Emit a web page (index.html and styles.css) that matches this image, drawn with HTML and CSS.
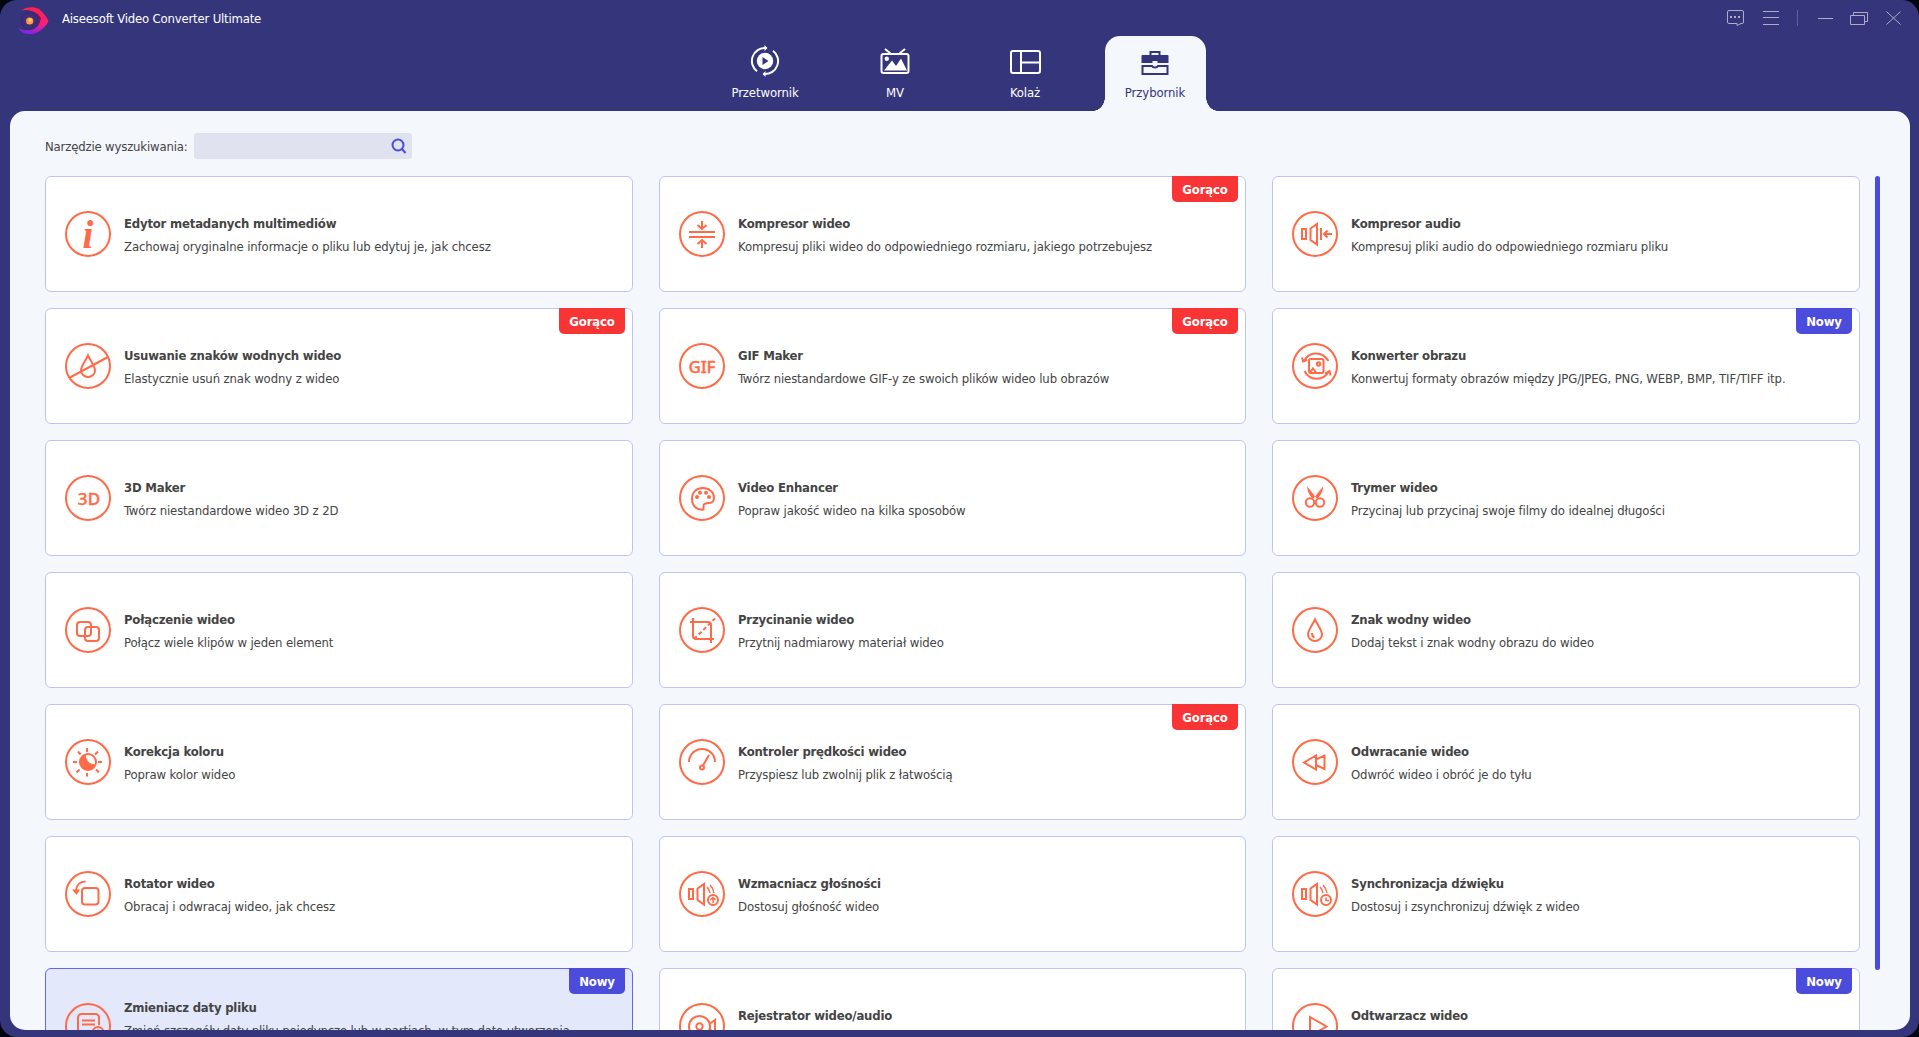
FILE: index.html
```
<!DOCTYPE html>
<html lang="pl">
<head>
    <meta charset="UTF-8">
    <meta name="viewport" content="width=device-width, initial-scale=1.0">
    <title>Aiseesoft Video Converter Ultimate</title>
    <link rel="stylesheet" href="styles.css">
</head>
<body>
    <div class="window">
        <header class="titlebar">
            <svg class="logo" width="32" height="30" viewBox="0 0 32 30">
                <defs>
                    <linearGradient id="logo-body" x1="0.6" y1="0" x2="0.3" y2="1">
                        <stop offset="0" stop-color="#ff1f4e"/>
                        <stop offset="0.5" stop-color="#f8207c"/>
                        <stop offset="1" stop-color="#7a22f5"/>
                    </linearGradient>
                    <radialGradient id="logo-eye">
                        <stop offset="0" stop-color="#5c2c80"/>
                        <stop offset="1" stop-color="#302c76"/>
                    </radialGradient>
                </defs>
                <path d="M4.500 4.500C8 1 17 0 22 3c4 3 7 7 9 11q.6 1.300 0 2.600C28 21 25 24 20 26.500 13 30 4 28 1.300 21.500 5 25 12 25 17 23c5-3 7-8 5-12C19 5 11 3 4.500 4.500z" fill="url(#logo-body)"/>
                <path d="M9 5c7-.5 12 2 15 7-1 6-4 9.500-9 11.500z" fill="#7c1650"/>
                <circle cx="12.500" cy="14.500" r="9.300" fill="url(#logo-eye)"/>
                <circle cx="12.700" cy="15" r="3.600" fill="#ff9c45"/>
                <circle cx="13.300" cy="14" r="1.800" fill="#ffd24a"/>
            </svg>
            <span class="app-name">Aiseesoft Video Converter Ultimate</span>
            <svg class="controls" width="176" height="18" viewBox="0 0 176 18">
                <path d="M3 1.500h13a1.500 1.500 0 0 1 1.500 1.500v10a1.500 1.500 0 0 1-1.500 1.500h-1l-4 2v-2H3a1.500 1.500 0 0 1-1.500-1.500V3A1.500 1.500 0 0 1 3 1.500z"/>
                <path class="dots" d="M4 7h2v2H4zM8 7h2v2H8zM12 7h2v2h-2z"/>
                <path d="M37 2.500h16M37 8.500h16M37 15.500h16"/>
                <path class="divider" d="M71.500 1v16"/>
                <path d="M92 9.500h15"/>
                <path d="M127.500 6V3.500h14v9H139M124.500 6.500h14v9h-14z"/>
                <path d="M160.500 2.500l14 13M174.500 2.500l-14 13"/>
            </svg>
        </header>

        <nav class="tabs">
            <div class="tab">
                <svg width="34" height="34" viewBox="0 0 34 34">
                    <circle cx="17" cy="17" r="8.200" fill="currentColor"/>
                    <path d="M14.500 13v8l6-4z" fill="#35357b"/>
                    <path d="M17.500 4A13 13 0 0 0 9 27.300M16.500 30A13 13 0 0 0 25 6.700" class="line"/>
                    <path d="M16.500 1l3 3-3 3zM17.500 27l-3 3 3 3z" fill="currentColor"/>
                </svg>
                <span>Przetwornik</span>
            </div>
            <div class="tab">
                <svg width="34" height="34" viewBox="0 0 34 34">
                    <rect x="3.500" y="10" width="27" height="19" rx="2" class="line"/>
                    <path d="M7 5l5.500 4.500M27 5l-5.500 4.500" class="line"/>
                    <circle cx="8.800" cy="14.800" r="2.200" fill="currentColor"/>
                    <path d="M6 26.500l8-10 4 5.500 5-7.500 6 12z" fill="currentColor"/>
                </svg>
                <span>MV</span>
            </div>
            <div class="tab">
                <svg width="34" height="34" viewBox="0 0 34 34">
                    <rect x="3" y="7" width="29" height="22" rx="2" class="line"/>
                    <path d="M13 7v22M13 18.500h19" class="line"/>
                </svg>
                <span>Kolaż</span>
            </div>
            <div class="tab active">
                <svg width="34" height="34" viewBox="0 0 34 34">
                    <path d="M12.500 11V8h9v3" class="line"/>
                    <path d="M4.500 11h25a1 1 0 0 1 1 1v7h-11v-2h-5v2h-11v-7a1 1 0 0 1 1-1z" fill="currentColor"/>
                    <path d="M14 22H4.500v8h25v-8H20a3.200 2.200 0 0 1-6 0z" class="line"/>
                </svg>
                <span>Przybornik</span>
            </div>
        </nav>

        <main class="content">
            <div class="search">
                <label for="tool-search">Narzędzie wyszukiwania:</label>
                <div class="search-box">
                    <input type="text" id="tool-search">
                    <svg width="16" height="16" viewBox="0 0 16 16">
                        <circle cx="7" cy="7" r="5.500"/>
                        <path d="M10.500 10.500L14.500 15"/>
                    </svg>
                </div>
            </div>

            <div class="tools">
                <div class="grid">
                    <div class="card">
                        <svg class="icon" viewBox="0 0 46 46">
                            <circle cx="23" cy="23" r="22"/>
                            <text x="23" y="37" class="letter-i">i</text>
                        </svg>
                        <div class="info">
                            <h3>Edytor metadanych multimediów</h3>
                            <p>Zachowaj oryginalne informacje o pliku lub edytuj je, jak chcesz</p>
                        </div>
                    </div>
                    <div class="card">
                        <svg class="icon" viewBox="0 0 46 46">
                            <circle cx="23" cy="23" r="22"/>
                            <path d="M10 21h26M10 26h26M23 10v8M18.500 14l4.500 4 4.500-4M23 37v-8M18.500 33l4.500-4 4.500 4"/>
                        </svg>
                        <div class="info">
                            <h3>Kompresor wideo</h3>
                            <p>Kompresuj pliki wideo do odpowiedniego rozmiaru, jakiego potrzebujesz</p>
                        </div>
                        <span class="badge hot">Gorąco</span>
                    </div>
                    <div class="card">
                        <svg class="icon" viewBox="0 0 46 46">
                            <circle cx="23" cy="23" r="22"/>
                            <path d="M10 18h4v10h-4zM18.500 17.500l6.500-4.500v20.500l-6.500-4.500zM29 17v12M40 23h-8M35.500 19.500L32 23l3.500 3.500"/>
                        </svg>
                        <div class="info">
                            <h3>Kompresor audio</h3>
                            <p>Kompresuj pliki audio do odpowiedniego rozmiaru pliku</p>
                        </div>
                    </div>

                    <div class="card">
                        <svg class="icon" viewBox="0 0 46 46">
                            <circle cx="23" cy="23" r="22"/>
                            <path d="M23 12.500C21 17 16 23 16 27.500a7 6.500 0 0 0 14 0C30 23 25 17 23 12.500zM4 35L43 14"/>
                        </svg>
                        <div class="info">
                            <h3>Usuwanie znaków wodnych wideo</h3>
                            <p>Elastycznie usuń znak wodny z wideo</p>
                        </div>
                        <span class="badge hot">Gorąco</span>
                    </div>
                    <div class="card">
                        <svg class="icon" viewBox="0 0 46 46">
                            <circle cx="23" cy="23" r="22"/>
                            <text x="23" y="30" class="letters" textLength="27">GIF</text>
                        </svg>
                        <div class="info">
                            <h3>GIF Maker</h3>
                            <p>Twórz niestandardowe GIF-y ze swoich plików wideo lub obrazów</p>
                        </div>
                        <span class="badge hot">Gorąco</span>
                    </div>
                    <div class="card">
                        <svg class="icon" viewBox="0 0 46 46">
                            <circle cx="23" cy="23" r="22"/>
                            <rect x="17" y="16" width="14.500" height="14" rx="2"/>
                            <circle cx="26.500" cy="21" r="1.700"/>
                            <path d="M18 29.500l3-4 3 4M10 14.500l1 4 4-1.500M12 18c5-9.500 18-10.500 24.500 0M12.500 28c5 10 19 10.500 24.500 0M33 30.500l4.500-2.500 1 4.500"/>
                        </svg>
                        <div class="info">
                            <h3>Konwerter obrazu</h3>
                            <p>Konwertuj formaty obrazów między JPG/JPEG, PNG, WEBP, BMP, TIF/TIFF itp.</p>
                        </div>
                        <span class="badge new">Nowy</span>
                    </div>

                    <div class="card">
                        <svg class="icon" viewBox="0 0 46 46">
                            <circle cx="23" cy="23" r="22"/>
                            <text x="24" y="30" class="letters" textLength="22.500">3D</text>
                        </svg>
                        <div class="info">
                            <h3>3D Maker</h3>
                            <p>Twórz niestandardowe wideo 3D z 2D</p>
                        </div>
                    </div>
                    <div class="card">
                        <svg class="icon" viewBox="0 0 46 46">
                            <circle cx="23" cy="23" r="22"/>
                            <path d="M24.500 34.500c-7 1-11.500-4-11.500-10.500C13 17 17.500 13 24 13c6.500 0 11 4.500 11 9.500 0 3.500-2 5.500-5 5.500-3.500 0-5.500.5-5.500 3z"/>
                            <g class="solid"><circle cx="18" cy="22" r="2"/><circle cx="21" cy="17.800" r="2"/><circle cx="27" cy="17.800" r="2"/><circle cx="30" cy="22" r="2"/></g>
                        </svg>
                        <div class="info">
                            <h3>Video Enhancer</h3>
                            <p>Popraw jakość wideo na kilka sposobów</p>
                        </div>
                    </div>
                    <div class="card">
                        <svg class="icon" viewBox="0 0 46 46">
                            <circle cx="23" cy="23" r="22"/>
                            <circle cx="18" cy="27.500" r="4.200"/>
                            <circle cx="28" cy="27.500" r="4.200"/>
                            <path class="solid" d="M15.300 11.500l10.200 13-2.500 1.500c-3-2.500-8-8-7.700-14.500zM31 11.500L20.500 24.500l2.500 1.500c3-2.500 8.300-8 8-14.500z"/>
                        </svg>
                        <div class="info">
                            <h3>Trymer wideo</h3>
                            <p>Przycinaj lub przycinaj swoje filmy do idealnej długości</p>
                        </div>
                    </div>

                    <div class="card">
                        <svg class="icon" viewBox="0 0 46 46">
                            <circle cx="23" cy="23" r="22"/>
                            <rect x="12" y="15" width="14" height="14" rx="3"/>
                            <rect x="20" y="20" width="14" height="14" rx="3"/>
                        </svg>
                        <div class="info">
                            <h3>Połączenie wideo</h3>
                            <p>Połącz wiele klipów w jeden element</p>
                        </div>
                    </div>
                    <div class="card">
                        <svg class="icon" viewBox="0 0 46 46">
                            <circle cx="23" cy="23" r="22"/>
                            <path d="M11 15h18a3 3 0 0 1 3 3v18M14 11v18a3 3 0 0 0 3 3h18"/>
                            <path d="M15 32L36 11.500" stroke-dasharray="4 2.500"/>
                        </svg>
                        <div class="info">
                            <h3>Przycinanie wideo</h3>
                            <p>Przytnij nadmiarowy materiał wideo</p>
                        </div>
                    </div>
                    <div class="card">
                        <svg class="icon" viewBox="0 0 46 46">
                            <circle cx="23" cy="23" r="22"/>
                            <path d="M23 12.500C21 17 16 23 16 27.500a7 6.500 0 0 0 14 0C30 23 25 17 23 12.500zM20 26c0 2.500.8 4 2.500 4.500"/>
                        </svg>
                        <div class="info">
                            <h3>Znak wodny wideo</h3>
                            <p>Dodaj tekst i znak wodny obrazu do wideo</p>
                        </div>
                    </div>

                    <div class="card">
                        <svg class="icon" viewBox="0 0 46 46">
                            <circle cx="23" cy="23" r="22"/>
                            <circle cx="23" cy="23" r="8"/>
                            <path class="solid" d="M21 15c-1 5 3.500 11 10 10.500-1.500 4-4 5.500-8 5.500-5 0-8-3.500-8-8 0-4 2.500-7 6-8z"/>
                            <path d="M22 9v4M22 34v3.500M8 23h4M33 23h4M13 12.500l2.500 3M33 12.500l-3 3M11.500 33.500l3-3M34 33.500l-3-3"/>
                        </svg>
                        <div class="info">
                            <h3>Korekcja koloru</h3>
                            <p>Popraw kolor wideo</p>
                        </div>
                    </div>
                    <div class="card">
                        <svg class="icon" viewBox="0 0 46 46">
                            <circle cx="23" cy="23" r="22"/>
                            <path d="M10 23a13 13 0 0 1 26 0M30 16l-6 10.500"/>
                            <circle cx="23" cy="28.500" r="2"/>
                        </svg>
                        <div class="info">
                            <h3>Kontroler prędkości wideo</h3>
                            <p>Przyspiesz lub zwolnij plik z łatwością</p>
                        </div>
                        <span class="badge hot">Gorąco</span>
                    </div>
                    <div class="card">
                        <svg class="icon" viewBox="0 0 46 46">
                            <circle cx="23" cy="23" r="22"/>
                            <path d="M24 16.500v14l-12-7zM24 20.500l8.500-4v13.500l-8.500-4"/>
                        </svg>
                        <div class="info">
                            <h3>Odwracanie wideo</h3>
                            <p>Odwróć wideo i obróć je do tyłu</p>
                        </div>
                    </div>

                    <div class="card">
                        <svg class="icon" viewBox="0 0 46 46">
                            <circle cx="23" cy="23" r="22"/>
                            <rect x="17" y="17" width="16.500" height="16.500" rx="3"/>
                            <path d="M20.500 10.500c-5 0-9 3-9.500 9"/>
                            <path class="solid" d="M7 18.500h8L11.500 24z"/>
                        </svg>
                        <div class="info">
                            <h3>Rotator wideo</h3>
                            <p>Obracaj i odwracaj wideo, jak chcesz</p>
                        </div>
                    </div>
                    <div class="card">
                        <svg class="icon" viewBox="0 0 46 46">
                            <circle cx="23" cy="23" r="22"/>
                            <path d="M10 18h4v10h-4zM18.500 17.500l6.500-4.500v20.500l-6.500-4.500z"/>
                            <path class="thin" d="M28 16c1.500 1.500 2.500 3.500 3 6M31 14c2 2 3.500 5 4 8"/>
                            <circle cx="34" cy="29" r="5"/>
                            <path class="thin" d="M34 32v-5.500M31.500 29l2.500-2.500 2.500 2.500"/>
                        </svg>
                        <div class="info">
                            <h3>Wzmacniacz głośności</h3>
                            <p>Dostosuj głośność wideo</p>
                        </div>
                    </div>
                    <div class="card">
                        <svg class="icon" viewBox="0 0 46 46">
                            <circle cx="23" cy="23" r="22"/>
                            <path d="M10 18h4v10h-4zM18.500 17.500l6.500-4.500v20.500l-6.500-4.500z"/>
                            <path class="thin" d="M28 16c1.500 1.500 2.500 3.500 3 6M31 14c2 2 3.500 5 4 8"/>
                            <circle cx="34" cy="29" r="5"/>
                            <path class="thin" d="M34 26.500v3h3"/>
                        </svg>
                        <div class="info">
                            <h3>Synchronizacja dźwięku</h3>
                            <p>Dostosuj i zsynchronizuj dźwięk z wideo</p>
                        </div>
                    </div>

                    <div class="card selected">
                        <svg class="icon" viewBox="0 0 46 46">
                            <circle cx="23" cy="23" r="22"/>
                            <path d="M34 22v-7.500a3.500 3.500 0 0 0-3.500-3.500h-14a3.500 3.500 0 0 0-3.500 3.500V31a3.500 3.500 0 0 0 3.500 3.500H26M17 17.500h13M17 21.500h13"/>
                            <circle cx="33" cy="29.500" r="5.500"/>
                            <path class="thin" d="M33 26.500v3h2.500"/>
                        </svg>
                        <div class="info">
                            <h3>Zmieniacz daty pliku</h3>
                            <p class="two-lines">Zmień szczegóły daty pliku pojedynczo lub w partiach, w tym datę utworzenia</p>
                        </div>
                        <span class="badge new">Nowy</span>
                    </div>
                    <div class="card">
                        <svg class="icon" viewBox="0 0 46 46">
                            <circle cx="23" cy="23" r="22"/>
                            <circle cx="20.500" cy="23.500" r="10.500"/>
                            <circle cx="20.500" cy="23.500" r="3.200"/>
                            <path d="M31 20.500l5-3.500v13l-5-3.500"/>
                        </svg>
                        <div class="info">
                            <h3>Rejestrator wideo/audio</h3>
                            <p></p>
                        </div>
                    </div>
                    <div class="card">
                        <svg class="icon" viewBox="0 0 46 46">
                            <circle cx="23" cy="23" r="22"/>
                            <path d="M18 14l16.500 9.500L18 33z"/>
                        </svg>
                        <div class="info">
                            <h3>Odtwarzacz wideo</h3>
                            <p></p>
                        </div>
                        <span class="badge new">Nowy</span>
                    </div>
                </div>
                <div class="scrollbar"></div>
            </div>
        </main>
    </div>
</body>
</html>
```
FILE: styles.css
```
* {
    box-sizing: border-box;
}

body {
    margin: 0;
    background-color: #04060f;
    font-family: "DejaVu Sans Condensed", "DejaVu Sans", sans-serif;
    font-size: 13px;
    font-stretch: condensed;
    letter-spacing: -0.15px;
    color: #444;
    overflow: hidden;
}

.window {
    display: flex;
    flex-direction: column;
    height: 1037px;
    padding: 0 9px 7px 10px;
    background-color: #35357b;
    border-radius: 17px;
    overflow: hidden;
}

/* title bar */
.titlebar {
    display: flex;
    align-items: center;
    height: 36px;
    padding: 0 8px 0 7px;
}

.logo {
    margin-top: 6px;
}

.app-name {
    margin-left: 13px;
    color: #fff;
    letter-spacing: -0.19px;
}

.controls {
    margin-left: auto;
    fill: none;
    stroke: #adadca;
}

.controls .dots {
    fill: #adadca;
    stroke: none;
}

.controls .divider {
    stroke: #6161a0;
}

/* main tabs */
.tabs {
    display: flex;
    justify-content: center;
    gap: 29px;
    height: 75px;
}

.tab {
    position: relative;
    display: flex;
    flex-direction: column;
    align-items: center;
    gap: 7px;
    width: 101px;
    padding-top: 8px;
    color: #fff;
    line-height: 16px;
    letter-spacing: -0.1px;
}

.tab .line {
    fill: none;
    stroke: currentColor;
    stroke-width: 2;
}

.tab.active {
    background-color: #f4f7fc;
    color: #35357b;
    border-radius: 15px 15px 0 0;
}

/* curved feet of the active tab */
.tab.active::before,
.tab.active::after {
    content: "";
    position: absolute;
    bottom: 0;
    width: 12px;
    height: 14px;
}

.tab.active::before {
    right: 100%;
    background: radial-gradient(ellipse 12px 14px at 0 0, #35357b 97%, #f4f7fc 100%);
}

.tab.active::after {
    left: 100%;
    background: radial-gradient(ellipse 12px 14px at 100% 0, #35357b 97%, #f4f7fc 100%);
}

/* content */
.content {
    display: flex;
    flex-direction: column;
    flex: 1;
    min-height: 0;
    padding: 22px 30px 0 35px;
    background-color: #f4f7fc;
    border-radius: 15px;
    overflow: hidden;
}

.search {
    display: flex;
    align-items: center;
    height: 26px;
}

.search label {
    width: 149px;
    white-space: nowrap;
    letter-spacing: -0.17px;
}

.search-box {
    display: flex;
    align-items: center;
    width: 218px;
    height: 26px;
    padding-right: 5px;
    background-color: #e0e2ef;
    border-radius: 3px;
}

.search-box input {
    flex: 1;
    min-width: 0;
    border: none;
    outline: none;
    background: none;
}

.search-box svg {
    fill: none;
    stroke: #4b4bdc;
    stroke-width: 2;
}

.tools {
    display: flex;
    justify-content: space-between;
    flex: 1;
    min-height: 0;
    margin-top: 17px;
}

.grid {
    display: grid;
    grid-template-columns: 588px 587px 588px;
    grid-auto-rows: 116px;
    gap: 16px 26px;
}

.scrollbar {
    width: 5px;
    height: 794px;
    background-color: #4b4bdc;
    border-radius: 3px;
}

.card {
    position: relative;
    display: flex;
    align-items: center;
    padding-left: 19px;
    background-color: #fff;
    border: 1px solid #c2c2fb;
    border-radius: 6px;
}

.card.selected {
    background-color: #e3e8fb;
    border-color: #6565f5;
}

.icon {
    width: 46px;
    height: 46px;
    margin-right: 13px;
    fill: none;
    stroke: #ff6b48;
    stroke-width: 2;
}

.icon .solid {
    fill: #ff6b48;
    stroke: none;
}

.icon .thin {
    stroke-width: 1.500;
}

.icon text {
    fill: #ff6b48;
    stroke: none;
    text-anchor: middle;
    letter-spacing: 0;
}

.letter-i {
    font: italic bold 39px "Liberation Serif", serif;
}

.icon .letters {
    font: 500 17px "Noto Sans", sans-serif;
    stroke: #ff6b48;
    stroke-width: 0.4;
}

.info {
    padding-top: 2px;
    line-height: 16px;
}

.info h3 {
    margin: 0 0 7px;
    font-size: 13px;
    letter-spacing: -0.2px;
}

.info p {
    min-height: 16px;
    margin: 0;
    letter-spacing: -0.12px;
}

.info .two-lines {
    min-height: 32px;
    letter-spacing: -0.17px;
}

.badge {
    position: absolute;
    top: -1px;
    right: 7px;
    width: 66px;
    height: 26px;
    border-radius: 0 0 5px 5px;
    color: #fff;
    font-weight: bold;
    line-height: 27px;
    text-align: center;
}

.badge.hot {
    background-color: #f83434;
}

.badge.new {
    width: 56px;
    background-color: #4b4bdc;
}
```
